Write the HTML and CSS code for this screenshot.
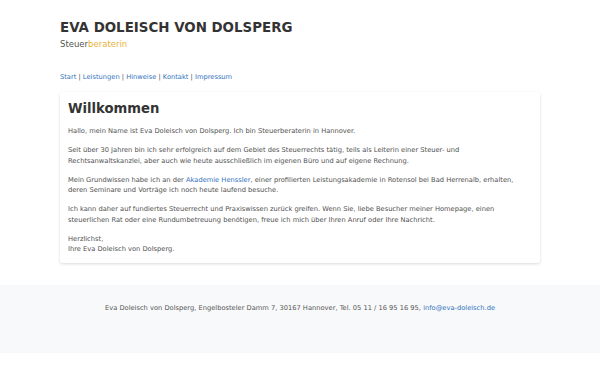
FILE: index.html
```html
<!DOCTYPE html>
<html lang="de">
<head>
<meta charset="utf-8">
<title>Eva Doleisch von Dolsperg</title>
<link rel="stylesheet" href="styles.css">
</head>
<body>
<div class="page">
  <header class="header">
    <h1 class="title">EVA DOLEISCH VON DOLSPERG</h1>
    <div class="subtitle">Steuer<span class="accent">beraterin</span></div>
  </header>
  <nav class="nav">
    <a href="#">Start</a> | <a href="#">Leistungen</a> | <a href="#">Hinweise</a> | <a href="#">Kontakt</a> | <a href="#">Impressum</a>
  </nav>
  <main class="card">
    <h2 class="heading">Willkommen</h2>
    <p>Hallo, mein Name ist Eva Doleisch von Dolsperg. Ich bin Steuerberaterin in Hannover.</p>
    <p>Seit über 30 Jahren bin ich sehr erfolgreich auf dem Gebiet des Steuerrechts tätig, teils als Leiterin einer Steuer- und<br>Rechtsanwaltskanzlei, aber auch wie heute ausschließlich im eigenen Büro und auf eigene Rechnung.</p>
    <p>Mein Grundwissen habe ich an der <a href="#">Akademie Henssler</a>, einer profilierten Leistungsakademie in Rotensol bei Bad Herrenalb, erhalten,<br>deren Seminare und Vorträge ich noch heute laufend besuche.</p>
    <p>Ich kann daher auf fundiertes Steuerrecht und Praxiswissen zurück greifen. Wenn Sie, liebe Besucher meiner Homepage, einen<br>steuerlichen Rat oder eine Rundumbetreuung benötigen, freue ich mich über Ihren Anruf oder Ihre Nachricht.</p>
    <p>Herzlichst,<br>Ihre Eva Doleisch von Dolsperg.</p>
  </main>
</div>
<footer class="footer">
  Eva Doleisch von Dolsperg, Engelbosteler Damm 7, 30167 Hannover, Tel. 05 11 / 16 95 16 95, <a href="#">info@eva-doleisch.de</a>
</footer>
</body>
</html>
```
FILE: styles.css
```css
html, body {
  margin: 0;
  padding: 0;
  background: #ffffff;
  font-family: "DejaVu Sans", sans-serif;
  color: #333333;
}
a {
  color: #3274bd;
  text-decoration: none;
}
.page {
  width: 480px;
  margin: 0 auto;
  padding-top: 19.5px;
}
.title {
  margin: 0;
  font-size: 13.4px;
  line-height: 16px;
  font-weight: bold;
  color: #333333;
}
.subtitle {
  margin-top: 2.5px;
  font-size: 8.5px;
  line-height: 12px;
  color: #555555;
}
.accent {
  color: #e9b33c;
}
.nav {
  margin-top: 22px;
  font-size: 6.7px;
  line-height: 10px;
  color: #555555;
}
.card {
  margin-top: 10px;
  background: #ffffff;
  border-radius: 3px;
  box-shadow: 0 1px 3px rgba(0, 0, 0, 0.15);
  padding: 8px 8px 8px;
  font-size: 6.7px;
  line-height: 10.5px;
  color: #505050;
}
.heading {
  margin: 0 0 8px;
  font-size: 13.2px;
  line-height: 18px;
  font-weight: bold;
  color: #333333;
}
.card p {
  margin: 0 0 8.5px;
}
.card p:last-child {
  margin-bottom: 0;
}
.footer {
  margin-top: 22px;
  background: #f8f9fa;
  height: 68px;
  padding-top: 18px;
  box-sizing: border-box;
  text-align: center;
  font-size: 6.7px;
  line-height: 10px;
  color: #555555;
}
```
